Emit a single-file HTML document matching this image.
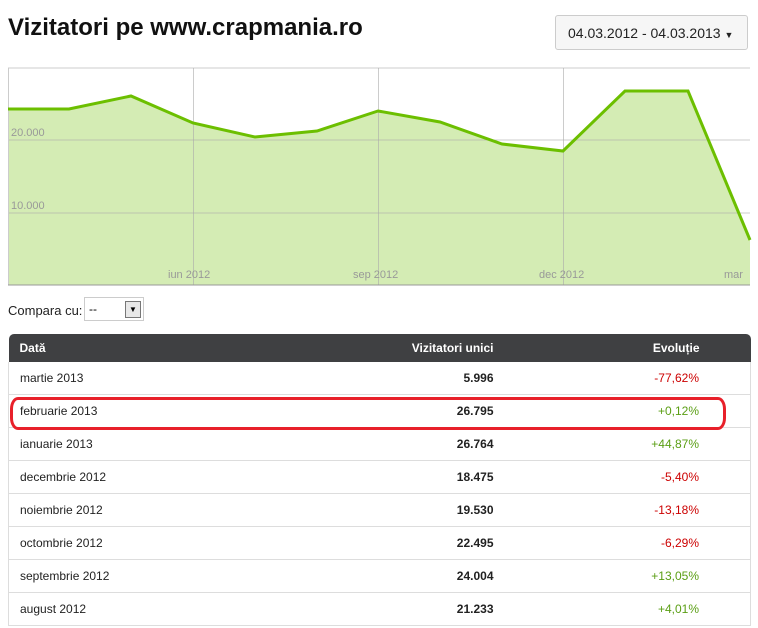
<!DOCTYPE html>
<html><head><meta charset="utf-8"><style>
body{margin:0;width:758px;height:628px;overflow:hidden;background:#fff;font-family:"Liberation Sans",Arial,sans-serif;position:relative}
h1{position:absolute;left:8px;top:14px;margin:0;font-size:24px;font-weight:bold;color:#111}
.dr{position:absolute;left:555px;top:15px;width:193px;height:35px;border:1px solid #ccc;border-radius:3px;background:#f6f6f6;font-size:14px;line-height:35px;color:#222;box-sizing:border-box;padding-left:12px;white-space:nowrap}
.cmp{position:absolute;left:8px;top:303px;font-size:13px;color:#222}
.sel{position:absolute;left:84px;top:297px;width:60px;height:24px;border:1px solid #ccc;box-sizing:border-box;font-size:12px;padding:4px 0 0 4px}
.sel b{position:absolute;right:2px;top:3px;width:14px;height:15px;border:1px solid #777;background:#e8e8e8;font-size:8px;text-align:center;line-height:15px}
table{position:absolute;left:8px;top:334px;width:742px;border-collapse:collapse;font-size:12px;table-layout:fixed}
th{background:#3f4042;color:#fff;height:28px;font-size:12px;text-align:left;padding:0 11px}
th:first-child{border-top-left-radius:5px}th:last-child{border-top-right-radius:5px}
td{height:32px;border-bottom:1px solid #ddd;padding:0 11px;color:#222}
.n{font-weight:bold;text-align:right;padding-right:3px}
.e{text-align:right;padding-right:51px}
.red{color:#c00}.grn{color:#5a9e14}
td:first-child{border-left:1px solid #ddd}td:last-child{border-right:1px solid #ddd}
</style></head><body>
<h1>Vizitatori pe www.crapmania.ro</h1>
<div class="dr">04.03.2012 - 04.03.2013 <span style="font-size:9px">▼</span></div>
<svg style="position:absolute;left:0;top:0" width="758" height="290">
<polygon points="8,109 69,109 131,96 193,123 255,137 317,131 378,111 440,122 502,144 563,151 625,91 688,91 750,240 750,285 8,285" fill="#d4ecb4"/>
<line x1="8" y1="68" x2="750" y2="68" stroke="#ccc"/>
<line x1="8" y1="140" x2="750" y2="140" stroke="#aaa" stroke-opacity=".6"/>
<line x1="8" y1="213" x2="750" y2="213" stroke="#aaa" stroke-opacity=".6"/>
<line x1="8.5" y1="68" x2="8.5" y2="285" stroke="#ccc"/>
<line x1="193.5" y1="68" x2="193.5" y2="285" stroke="#aaa" stroke-opacity=".6"/>
<line x1="378.5" y1="68" x2="378.5" y2="285" stroke="#aaa" stroke-opacity=".6"/>
<line x1="563.5" y1="68" x2="563.5" y2="285" stroke="#aaa" stroke-opacity=".6"/>
<line x1="8" y1="285" x2="750" y2="285" stroke="#999"/>
<polyline points="8,109 69,109 131,96 193,123 255,137 317,131 378,111 440,122 502,144 563,151 625,91 688,91 750,240" fill="none" stroke="#6cbf00" stroke-width="3"/>
<g font-size="11" fill="#999" font-family="Liberation Sans,sans-serif">
<text x="11" y="136">20.000</text><text x="11" y="209">10.000</text>
<text x="168" y="278">iun 2012</text><text x="353" y="278">sep 2012</text><text x="539" y="278">dec 2012</text><text x="724" y="278">mar</text></g>
</svg>
<div class="cmp">Compara cu:</div>
<div class="sel">--<b>▼</b></div>
<table>
<colgroup><col style="width:290px"><col style="width:198px"><col style="width:254px"></colgroup>
<tr><th>Dată</th><th class="n">Vizitatori unici</th><th class="e">Evoluție</th></tr>
<tr><td>martie 2013</td><td class="n">5.996</td><td class="e red">-77,62%</td></tr>
<tr><td>februarie 2013</td><td class="n">26.795</td><td class="e grn">+0,12%</td></tr>
<tr><td>ianuarie 2013</td><td class="n">26.764</td><td class="e grn">+44,87%</td></tr>
<tr><td>decembrie 2012</td><td class="n">18.475</td><td class="e red">-5,40%</td></tr>
<tr><td>noiembrie 2012</td><td class="n">19.530</td><td class="e red">-13,18%</td></tr>
<tr><td>octombrie 2012</td><td class="n">22.495</td><td class="e red">-6,29%</td></tr>
<tr><td>septembrie 2012</td><td class="n">24.004</td><td class="e grn">+13,05%</td></tr>
<tr><td>august 2012</td><td class="n">21.233</td><td class="e grn">+4,01%</td></tr>
</table>
<div style="position:absolute;left:10px;top:397px;width:710px;height:27px;border:3px solid #e8202a;border-radius:8px/12px"></div>
</body></html>
